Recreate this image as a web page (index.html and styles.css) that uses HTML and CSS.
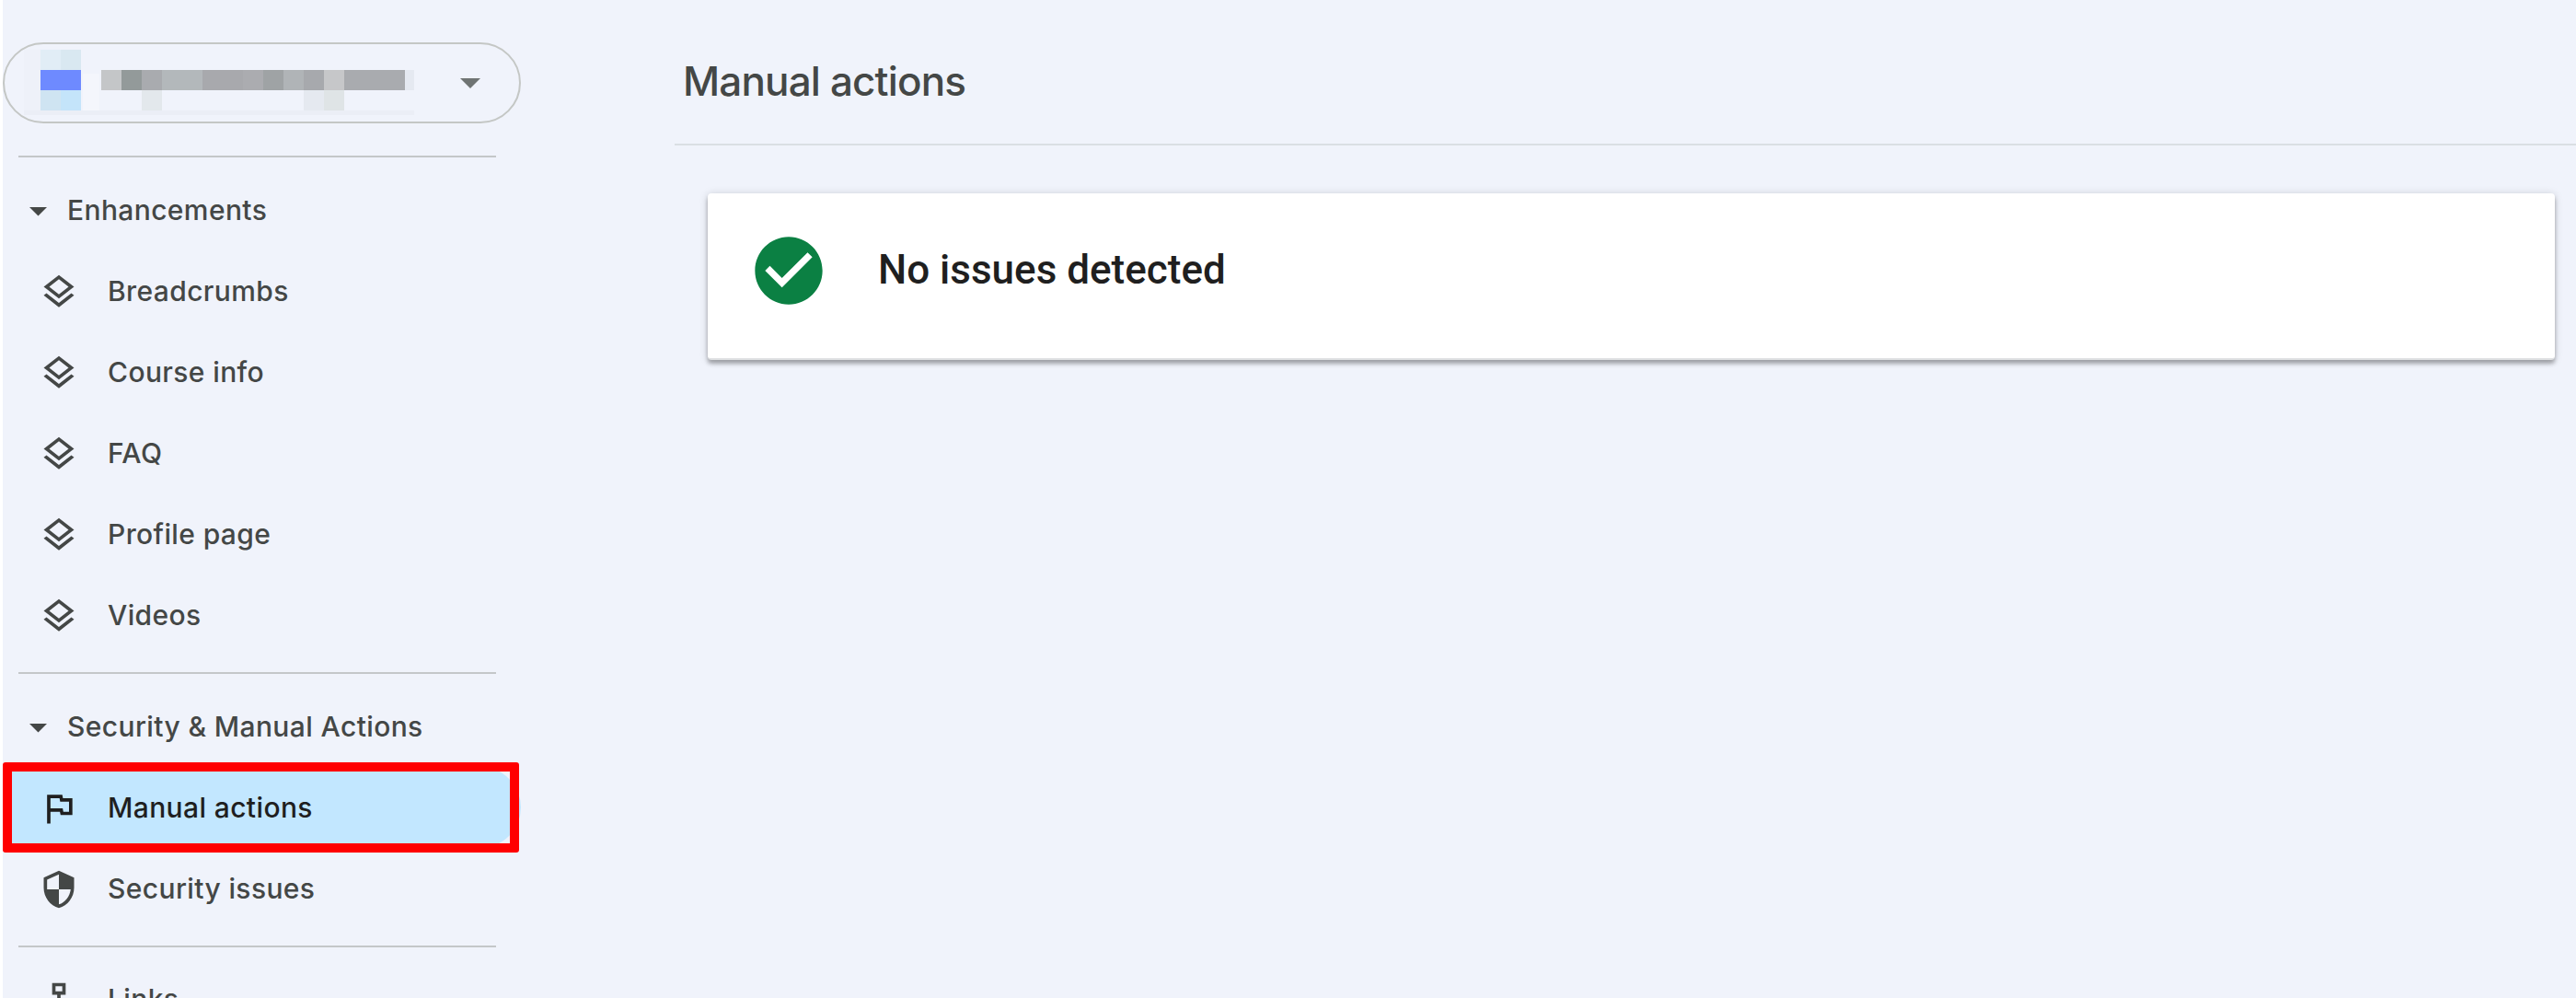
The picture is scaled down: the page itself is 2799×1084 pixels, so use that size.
FILE: index.html
```html
<!DOCTYPE html>
<html lang="en">
<head>
    <meta charset="UTF-8">
    <meta name="viewport" content="width=device-width, initial-scale=1.0">
    <title>Manual actions</title>
    <link rel="stylesheet" href="styles.css">
</head>
<body>

    <svg class="symbols" width="0" height="0">
        <symbol id="layers" viewBox="0 0 24 24">
            <path d="M11.99 18.54l-7.37-5.73L3 14.07l9 7 9-7-1.63-1.27zM12 16l7.36-5.73L21 9l-9-7-9 7 1.63 1.27L12 16zm0-11.47L17.74 9 12 13.47 6.26 9 12 4.53z"/>
        </symbol>
    </svg>

    <nav class="sidebar">
        <div class="property">
            <!-- pixelated property icon and name -->
            <svg class="mosaic" viewBox="0 0 424 72" shape-rendering="crispEdges">
                <rect x="18" y="0" width="22" height="22" fill="#e1edf6"/>
                <rect x="40" y="0" width="22" height="22" fill="#d9e8f1"/>
                <rect x="0" y="0" width="18" height="66" fill="#eef1f9"/>
                <rect x="18" y="22" width="44" height="22" fill="#6e8aff"/>
                <rect x="18" y="44" width="22" height="22" fill="#cfe4f2"/>
                <rect x="40" y="44" width="22" height="22" fill="#c4e4fa"/>
                <rect x="64" y="26" width="18" height="40" fill="#f4f6fc"/>
                <rect x="84" y="22" width="22" height="22" fill="#c4c6c8"/>
                <rect x="106" y="22" width="22" height="22" fill="#939a9a"/>
                <rect x="128" y="22" width="22" height="22" fill="#a9abaf"/>
                <rect x="150" y="22" width="44" height="22" fill="#b3b8bb"/>
                <rect x="194" y="22" width="44" height="22" fill="#a8a9ad"/>
                <rect x="238" y="22" width="22" height="22" fill="#abacb0"/>
                <rect x="260" y="22" width="22" height="22" fill="#9fa3a5"/>
                <rect x="282" y="22" width="22" height="22" fill="#b0b4b7"/>
                <rect x="304" y="22" width="22" height="22" fill="#a7a9ad"/>
                <rect x="326" y="22" width="22" height="22" fill="#c6c7c9"/>
                <rect x="348" y="22" width="66" height="22" fill="#a9abaf"/>
                <rect x="414" y="22" width="10" height="22" fill="#e5e9f1"/>
                <rect x="128" y="44" width="22" height="22" fill="#e3e8ec"/>
                <rect x="304" y="44" width="22" height="22" fill="#e5e9f0"/>
                <rect x="326" y="44" width="22" height="22" fill="#dfe4e6"/>
                <rect x="0" y="66" width="424" height="5" fill="#ebeef6"/>
            </svg>
            <svg class="arrow" viewBox="0 0 22 11"><path d="M0 0h22L11 11z"/></svg>
        </div>

        <hr class="divider first">
        <div class="group">
            <svg class="caret" viewBox="0 0 19 10"><path d="M0 0h19L9.5 9.5z"/></svg>
            <span>Enhancements</span>
        </div>
        <div class="item"><svg class="icon"><use href="#layers"/></svg><span>Breadcrumbs</span></div>
        <div class="item"><svg class="icon"><use href="#layers"/></svg><span>Course info</span></div>
        <div class="item"><svg class="icon"><use href="#layers"/></svg><span>FAQ</span></div>
        <div class="item"><svg class="icon"><use href="#layers"/></svg><span>Profile page</span></div>
        <div class="item"><svg class="icon"><use href="#layers"/></svg><span>Videos</span></div>

        <hr class="divider">
        <div class="group">
            <svg class="caret" viewBox="0 0 19 10"><path d="M0 0h19L9.5 9.5z"/></svg>
            <span>Security &amp; Manual Actions</span>
        </div>
        <div class="item active">
            <svg class="icon" viewBox="0 0 24 24"><path d="M12.36 6l.4 2H18v6h-3.36l-.4-2H7V6h5.36M14 4H5v17h2v-7h5.6l.4 2h7V6h-5.6L14 4z"/></svg>
            <span>Manual actions</span>
            <div class="highlight"></div>
        </div>
        <div class="item">
            <svg class="icon" viewBox="0 0 24 24"><path d="M12 1L3 5v6c0 5.55 3.84 10.74 9 12 5.16-1.26 9-6.45 9-12V5l-9-4zm0 10.99h7c-.53 4.12-3.28 7.79-7 8.94V12H5V6.3l7-3.11v8.8z"/></svg>
            <span>Security issues</span>
        </div>

        <hr class="divider last">
        <div class="item">
            <svg class="icon" viewBox="0 0 24 24"><path fill-rule="evenodd" d="M13 22h8v-7h-3v-4h-5V9h3V2H8v7h3v2H6v4H3v7h8v-7H8v-2h8v2h-3v7zM10 7V4h4v3h-4zM9 17v3H5v-3h4zM19 17v3h-4v-3h4z"/></svg>
            <span>Links</span>
        </div>
    </nav>

    <main class="content">
        <h1>Manual actions</h1>
        <div class="card">
            <svg class="check" viewBox="0 0 24 24"><path d="M12 2C6.48 2 2 6.48 2 12s4.48 10 10 10 10-4.48 10-10S17.52 2 12 2zm-2 15l-5-5 1.41-1.41L10 14.17l7.59-7.59L19 8l-9 9z"/></svg>
            <span>No issues detected</span>
        </div>
    </main>

</body>
</html>
```
FILE: styles.css
```css
* {
    box-sizing: border-box;
}
body {
    margin: 0;
    height: 1084px;
    display: flex;
    overflow: hidden;
    background-color: #f0f3fb;
    border-left: 3px solid #fff;
    font-family: Inter, "Liberation Sans", sans-serif;
    color: #444746;
}
svg {
    display: block;
    flex: none;
    fill: currentColor;
}
.symbols {
    display: none;
}
.sidebar {
    width: 563px;
    height: 1084px;
    flex: none;
    overflow: hidden;
    padding-top: 46px;
    font-size: 30px;
    font-weight: 500;
    letter-spacing: 0.38px;
}
.property {
    height: 88px;
    display: flex;
    align-items: center;
    border: 2px solid #c4c7c5;
    border-radius: 44px;
    padding-left: 21px;
}
.mosaic {
    width: 424px;
    height: 72px;
}
.arrow {
    width: 22px;
    height: 11px;
    margin-left: 50px;
    color: #6f7473;
}
.divider {
    width: 519px;
    height: 2px;
    border: none;
    margin: 18px 0 13px 17px;
    background-color: #c4c7c9;
}
.divider.first {
    margin-top: 35px;
}
.divider.last {
    margin-bottom: 12px;
}
.group,
.item {
    height: 88px;
    display: flex;
    align-items: center;
    white-space: nowrap;
}
.group {
    padding-left: 29px;
    gap: 22px;
}
.caret {
    width: 19px;
    height: 10px;
    margin-top: 3px;
}
.item {
    padding-left: 39px;
    gap: 31px;
}
.icon {
    width: 44px;
    height: 44px;
    margin-top: 1px;
}
.active {
    position: relative;
    background-color: #c2e7ff;
    border-radius: 0 44px 44px 0;
    color: #1f1f1f;
}
.highlight {
    position: absolute;
    top: -5px;
    left: 0;
    width: 561px;
    height: 98px;
    border: 10px solid #ff0000;
    border-radius: 3px;
}
.content {
    flex: 1;
    padding-left: 167px;
}
h1 {
    margin: 0;
    height: 158px;
    padding: 61px 0 0 9px;
    border-bottom: 2px solid #dadfe3;
    font-size: 44px;
    line-height: 54px;
    font-weight: 500;
    letter-spacing: -0.85px;
}
.card {
    height: 181px;
    margin: 52px 23px 0 36px;
    padding: 40px 44px;
    display: flex;
    align-items: flex-start;
    gap: 53px;
    background-color: #fff;
    border-bottom: 2px solid #dfe1e3;
    border-radius: 4px;
    box-shadow: 0 4px 4px rgba(0, 0, 0, 0.28), 0 1px 10px rgba(0, 0, 0, 0.16);
    font-family: Roboto, sans-serif;
    font-size: 44px;
    line-height: 86px;
    font-weight: 500;
    color: #1f1f1f;
}
.check {
    width: 88px;
    height: 88px;
    color: #0b8043;
}
```
